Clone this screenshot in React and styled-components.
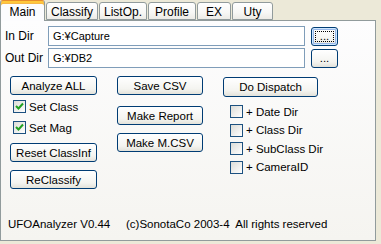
import React from "react";
import styled, { createGlobalStyle } from "styled-components";

const Global = createGlobalStyle`
  * { box-sizing: border-box; }
  html, body { margin: 0; padding: 0; background: #ECE9D8; }
  body {
    font-family: "Liberation Sans", "Noto Sans CJK JP", sans-serif;
    font-size: 11.5px;
    color: #000;
  }
`;

const Window = styled.div`
  width: 381px;
  height: 244px;
  background: #ECE9D8;
  display: flex;
  flex-direction: column;
  overflow: hidden;
`;

const TabBar = styled.div`
  height: 20px;
  display: flex;
  align-items: flex-end;
  position: relative;
  z-index: 1;
`;

const Tab = styled.div`
  width: ${(p) => p.$w}px;
  height: ${(p) => (p.$active ? 21 : 18)}px;
  margin-left: ${(p) => (p.$first ? 0 : 1)}px;
  margin-bottom: ${(p) => (p.$active ? -1 : 0)}px;
  display: flex;
  align-items: center;
  justify-content: center;
  font-size: 12px;
  border: 1px solid #919B9C;
  border-bottom: ${(p) => (p.$active ? "none" : "1px solid #919B9C")};
  border-radius: 3px 3px 0 0;
  background: ${(p) =>
    p.$active
      ? "#FCFCFE"
      : "linear-gradient(#FFFFFF, #F7F7F5 60%, #ECEBE6)"};
  box-shadow: ${(p) =>
    p.$active ? "inset 0 2px 0 #FFC83C, inset 0 3px 0 #F6B84A" : "none"};
  border-top-color: ${(p) => (p.$active ? "#E68B2C" : "#919B9C")};
  padding-top: 1px;
`;

const Panel = styled.div`
  width: 376px;
  height: 221px;
  border: 1px solid #919B9C;
  background: linear-gradient(#FDFDFE, #F5F4F0);
  display: flex;
  flex-direction: column;
  padding: 5px 0 0 0;
`;

const DirRow = styled.div`
  display: flex;
  align-items: center;
  height: 20px;
  margin-top: ${(p) => p.$mt || 0}px;
`;

const Label = styled.div`
  width: 47px;
  padding-left: 4px;
  font-size: 12px;
`;

const TextBox = styled.div`
  width: 257px;
  height: 20px;
  border: 1px solid #7F9DB9;
  background: #FFFFFF;
  display: flex;
  align-items: center;
  padding-left: 4px;
  font-size: 11px;
`;

const Button = styled.div`
  width: ${(p) => p.$w}px;
  height: ${(p) => p.$h || 19}px;
  margin-top: ${(p) => p.$mt || 0}px;
  margin-left: ${(p) => p.$ml || 0}px;
  border: 1px solid #003C74;
  border-radius: 3px;
  background: linear-gradient(#FFFFFF, #F4F4F0 70%, #E3E2DA);
  display: flex;
  align-items: center;
  justify-content: center;
  font-size: 11.5px;
  white-space: nowrap;
  position: relative;
  box-shadow: ${(p) =>
    p.$focus ? "inset 0 0 0 1px #CEE7FF, inset 0 0 0 2px #98B8EA" : "none"};
`;

const FocusRing = styled.span`
  position: absolute;
  inset: 3px;
  border: 1px dotted #000;
`;

const Columns = styled.div`
  display: grid;
  grid-template-columns: 87px 86px 95px;
  column-gap: 20px;
  margin-top: 8px;
  padding-left: 9px;
  align-items: start;
`;

const Col = styled.div`
  display: flex;
  flex-direction: column;
`;

const CheckGroup = styled.div`
  display: flex;
  flex-direction: column;
  gap: ${(p) => p.$gap}px;
  margin-top: ${(p) => p.$mt}px;
  margin-left: ${(p) => p.$ml}px;
`;

const CheckRow = styled.div`
  display: flex;
  align-items: center;
  height: 13px;
  gap: 3px;
  font-size: 11.5px;
  white-space: nowrap;
`;

const Box = styled.div`
  width: 13px;
  height: 13px;
  border: 1px solid #1C5180;
  background: linear-gradient(135deg, #DCDCD7, #FFFFFF);
  display: flex;
  align-items: center;
  justify-content: center;
  flex: none;
`;

const Footer = styled.div`
  margin-top: auto;
  display: flex;
  padding: 0 0 10px 7px;
  font-size: 11.5px;
  white-space: nowrap;
`;

const FooterName = styled.span`
  width: 118px;
`;

const Check = ({ checked, children }) => (
  <CheckRow>
    <Box>
      {checked && (
        <svg width="9" height="9" viewBox="0 0 9 9">
          <path d="M1 4 L3.5 6.5 L8 1.5" stroke="#21A121" strokeWidth="2" fill="none" />
        </svg>
      )}
    </Box>
    <span>{children}</span>
  </CheckRow>
);

const tabs = [
  { t: "Main", w: 45, active: true },
  { t: "Classify", w: 52 },
  { t: "ListOp.", w: 48 },
  { t: "Profile", w: 48 },
  { t: "EX", w: 34 },
  { t: "Uty", w: 41 },
];

export default function App() {
  return (
    <Window>
      <Global />
      <TabBar>
        {tabs.map((tb, i) => (
          <Tab key={tb.t} $w={tb.w} $active={tb.active} $first={i === 0}>
            {tb.t}
          </Tab>
        ))}
      </TabBar>
      <Panel>
        <DirRow>
          <Label>In Dir</Label>
          <TextBox>G:¥Capture</TextBox>
          <Button $w={27} $ml={6} $focus>
            <FocusRing />
            ...
          </Button>
        </DirRow>
        <DirRow $mt={2}>
          <Label>Out Dir</Label>
          <TextBox>G:¥DB2</TextBox>
          <Button $w={27} $ml={6}>...</Button>
        </DirRow>
        <Columns>
          <Col>
            <Button $w={87}>Analyze ALL</Button>
            <CheckGroup $gap={8} $mt={5} $ml={3}>
              <Check checked>Set Class</Check>
              <Check checked>Set Mag</Check>
            </CheckGroup>
            <Button $w={87} $mt={9}>Reset ClassInf</Button>
            <Button $w={87} $mt={8}>ReClassify</Button>
          </Col>
          <Col>
            <Button $w={86}>Save CSV</Button>
            <Button $w={86} $mt={11}>Make Report</Button>
            <Button $w={86} $mt={8}>Make M.CSV</Button>
          </Col>
          <Col>
            <Button $w={95} $h={20} $mt={1}>Do Dispatch</Button>
            <CheckGroup $gap={5.5} $mt={8} $ml={7}>
              <Check>+ Date Dir</Check>
              <Check>+ Class Dir</Check>
              <Check>+ SubClass Dir</Check>
              <Check>+ CameraID</Check>
            </CheckGroup>
          </Col>
        </Columns>
        <Footer>
          <FooterName>UFOAnalyzer V0.44</FooterName>
          <span>(c)SonotaCo 2003-4&nbsp; All rights reserved</span>
        </Footer>
      </Panel>
    </Window>
  );
}
